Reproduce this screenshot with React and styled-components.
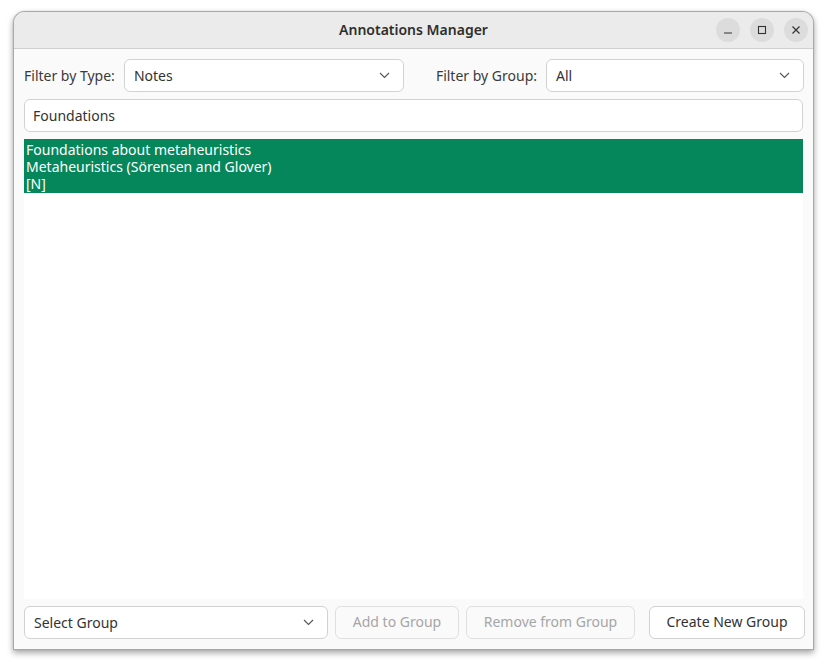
import React from "react";
import styled, { createGlobalStyle } from "styled-components";

const Global = createGlobalStyle`
  html, body { margin: 0; padding: 0; background: #ffffff; }
  body { font-family: "Noto Sans", "Open Sans", sans-serif; font-size: 14px; color: #333; }
  * { box-sizing: border-box; }
`;

const Stage = styled.div`
  width: 828px;
  height: 666px;
  padding: 11px 14px 0 13px;
`;

const Window = styled.div`
  width: 801px;
  height: 639px;
  display: flex;
  flex-direction: column;
  border: 1px solid #a9a9a9;
  border-radius: 12px 12px 0 0;
  background: #fafafa;
  box-shadow: 0 3px 6px rgba(0, 0, 0, 0.35), 0 0 1px rgba(0, 0, 0, 0.3);
  overflow: hidden;
`;

const TitleBar = styled.div`
  height: 37px;
  flex: none;
  display: flex;
  align-items: center;
  justify-content: center;
  position: relative;
  background: #ebebeb;
  border-bottom: 1px solid #cfcfcf;
`;

const Title = styled.div`
  font-weight: 600;
  font-size: 14px;
  color: #2e2e2e;
  margin-top: -1px;
`;

const Controls = styled.div`
  position: absolute;
  right: 5px;
  top: 6px;
  display: flex;
  gap: 10px;
`;

const Ctl = styled.div`
  width: 24px;
  height: 24px;
  border-radius: 50%;
  background: #dcdcdc;
  display: flex;
  align-items: center;
  justify-content: center;
`;

const Body = styled.div`
  flex: 1;
  display: flex;
  flex-direction: column;
  gap: 7px;
  padding: 10px;
  min-height: 0;
`;

const Row = styled.div`
  display: flex;
  align-items: center;
  height: 33px;
  flex: none;
`;

const Label = styled.span`
  color: #3a3a3a;
  margin-right: 9px;
  margin-left: ${(p) => p.lead || 0}px;
  white-space: nowrap;
  padding-bottom: 1px;
`;

const Combo = styled.div`
  width: ${(p) => p.w}px;
  height: 33px;
  flex: none;
  display: flex;
  align-items: center;
  justify-content: space-between;
  padding: 0 13px 1px 9px;
  margin-left: ${(p) => (p.push ? "auto" : "0")};
  background: #ffffff;
  border: 1px solid #d2d2d2;
  border-radius: 6px;
  color: #333;
`;

const Search = styled.div`
  height: 33px;
  flex: none;
  display: flex;
  align-items: center;
  padding: 0 8px 1px;
  background: #ffffff;
  border: 1px solid #d2d2d2;
  border-radius: 6px;
  color: #333;
`;

const List = styled.div`
  flex: 1;
  background: #ffffff;
`;

const Item = styled.div`
  background: ${(p) => (p.selected ? "#05875b" : "transparent")};
  color: ${(p) => (p.selected ? "#ffffff" : "#333")};
  padding: 2px 2px 1px;
`;

const Line = styled.div`
  height: 17px;
  line-height: 17px;
  white-space: nowrap;
`;

const Footer = styled.div`
  display: flex;
  align-items: center;
  height: 33px;
  flex: none;
  gap: 7px;
`;

const Button = styled.div`
  width: ${(p) => p.w}px;
  height: 33px;
  flex: none;
  display: flex;
  align-items: center;
  justify-content: center;
  padding-bottom: 2px;
  border: 1px solid ${(p) => (p.disabled ? "#e0e0e0" : "#d2d2d2")};
  border-radius: 6px;
  background: ${(p) => (p.disabled ? "#fafafa" : "#ffffff")};
  color: ${(p) => (p.disabled ? "#a6a6a6" : "#333")};
`;

const Sep = styled.div`
  width: 1px;
  height: 33px;
  background: #dedede;
`;

const Chevron = () => (
  <svg width="11" height="7" viewBox="0 0 11 7">
    <path d="M1 1l4.5 4.5L10 1" fill="none" stroke="#555" strokeWidth="1.1" />
  </svg>
);

export default function App() {
  return (
    <Stage>
      <Global />
      <Window>
        <TitleBar>
          <Title>Annotations Manager</Title>
          <Controls>
            <Ctl>
              <svg width="10" height="10" viewBox="0 0 10 10">
                <path d="M1 8h8" stroke="#333" strokeWidth="1.2" />
              </svg>
            </Ctl>
            <Ctl>
              <svg width="10" height="10" viewBox="0 0 10 10">
                <rect x="1.5" y="1.5" width="7" height="7" fill="none" stroke="#333" strokeWidth="1.1" />
              </svg>
            </Ctl>
            <Ctl>
              <svg width="10" height="10" viewBox="0 0 10 10">
                <path d="M1.5 1.5l7 7M8.5 1.5l-7 7" stroke="#333" strokeWidth="1.2" />
              </svg>
            </Ctl>
          </Controls>
        </TitleBar>
        <Body>
          <Row>
            <Label>Filter by Type:</Label>
            <Combo w={280}>
              <span>Notes</span>
              <Chevron />
            </Combo>
            <Label lead={32}>Filter by Group:</Label>
            <Combo w={258} push>
              <span>All</span>
              <Chevron />
            </Combo>
          </Row>
          <Search>Foundations</Search>
          <List>
            <Item selected>
              <Line>Foundations about metaheuristics</Line>
              <Line>Metaheuristics (Sörensen and Glover)</Line>
              <Line>[N]</Line>
            </Item>
          </List>
          <Footer>
            <Combo w={304}>
              <span>Select Group</span>
              <Chevron />
            </Combo>
            <Button w={124} disabled>Add to Group</Button>
            <Button w={169} disabled>Remove from Group</Button>
            <Sep />
            <Button w={156}>Create New Group</Button>
          </Footer>
        </Body>
      </Window>
    </Stage>
  );
}
